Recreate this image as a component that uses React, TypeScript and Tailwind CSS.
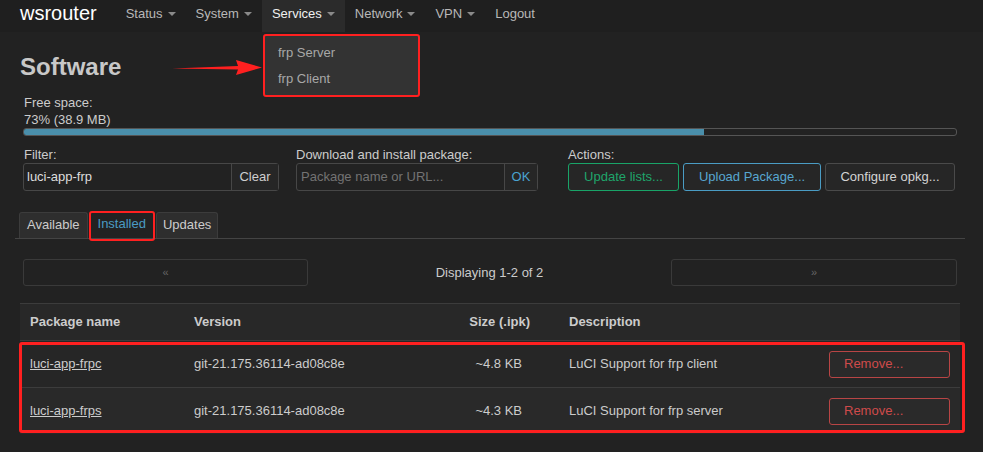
import React from 'react';

const navItems = ['Status', 'System', 'Services', 'Network', 'VPN'];

const Caret = () => (
  <span className="ml-[5px] inline-block h-0 w-0 border-x-[4px] border-t-[4px] border-x-transparent border-t-[#8a8a8a]" />
);

const packages = [
  { name: 'luci-app-frpc', version: 'git-21.175.36114-ad08c8e', size: '~4.8 KB', desc: 'LuCI Support for frp client' },
  { name: 'luci-app-frps', version: 'git-21.175.36114-ad08c8e', size: '~4.3 KB', desc: 'LuCI Support for frp server' },
];

const App = () => {
  return (
    <div className="relative min-h-[452px] w-[983px] bg-[#222222] font-['Liberation_Sans',Arial,sans-serif] text-[13px] text-[#cccccc]">
      {/* top bar */}
      <header className="flex h-[32px] items-center bg-[#1f1f1f]">
        <div className="ml-[20px] mr-[19px] pb-[6px] text-[20px] leading-[32px] text-white">wsrouter</div>
        {navItems.map((item) => (
          <div
            key={item}
            className={
              item === 'Services'
                ? 'flex h-[32px] items-center bg-[#2b2b2b] px-[10px] pb-[5px] text-[#f0f0f0]'
                : 'flex h-[32px] items-center px-[10px] pb-[5px] text-[#b8b8b8]'
            }
          >
            {item}
            <Caret />
          </div>
        ))}
        <div className="flex h-[32px] items-center px-[10px] pb-[5px] text-[#b8b8b8]">Logout</div>
      </header>

      {/* open Services menu */}
      <div className="absolute left-[263px] top-[34px] flex h-[63px] w-[157px] flex-col justify-center gap-[10px] rounded-[3px] border-[2px] border-[#ff2020] bg-[#333333] pl-[13px] text-[#a8a8a8]">
        <span className="leading-[16px]">frp Server</span>
        <span className="leading-[16px]">frp Client</span>
      </div>
      <svg className="absolute left-[172px] top-[58px]" width="90" height="20" viewBox="0 0 90 20">
        <path d="M0 10.5 L66 8 L64 2 L90 9.5 L64 17 L66 11.5 Z" fill="#ff2020" />
      </svg>

      <main className="pl-[23px] pr-[26px]">
        <h2 className="-ml-[3px] mt-[20px] text-[24px] font-bold leading-[30px] text-[#c8c8c8]">Software</h2>

        <div className="mt-[12px] pl-[1px] leading-[17px]">Free space:</div>
        <div className="pl-[1px] leading-[17px]">73% (38.9 MB)</div>
        <div className="h-[8px] w-[934px] overflow-hidden rounded-[3px] border border-[#555555]">
          <div className="h-full w-[73%] bg-[#4a8fab]" />
        </div>

        <div className="mt-[10px] flex">
          <div className="w-[256px]">
            <div className="pl-[1px] leading-[17px]">Filter:</div>
            <div className="flex h-[28px] rounded-[3px] border border-[#474747] bg-[#222222]">
              <div className="flex flex-1 items-center pl-[3px] text-[#dddddd]">luci-app-frp</div>
              <div className="flex w-[47px] items-center justify-center border-l border-[#474747] bg-[#262626] text-[#cfcfcf]">Clear</div>
            </div>
          </div>
          <div className="ml-[17px] w-[242px]">
            <div className="leading-[17px]">Download and install package:</div>
            <div className="flex h-[28px] rounded-[3px] border border-[#474747] bg-[#222222]">
              <div className="flex flex-1 items-center pl-[4px] text-[#737373]">Package name or URL...</div>
              <div className="flex w-[33px] items-center justify-center border-l border-[#474747] bg-[#262626] text-[#4aa3d0]">OK</div>
            </div>
          </div>
          <div className="ml-[30px]">
            <div className="leading-[17px]">Actions:</div>
            <div className="flex gap-[4px]">
              <div className="flex h-[28px] w-[111px] items-center justify-center rounded-[3px] border border-[#19a468] bg-[#262626] text-[#1fa56b]">Update lists...</div>
              <div className="flex h-[28px] w-[138px] items-center justify-center rounded-[3px] border border-[#4a9cc4] bg-[#262626] text-[#58a6d0]">Upload Package...</div>
              <div className="flex h-[28px] w-[130px] items-center justify-center rounded-[3px] border border-[#4a4a4a] bg-[#262626] text-[#d4d4d4]">Configure opkg...</div>
            </div>
          </div>
        </div>

        {/* tabs */}
        <div className="-mx-[8px] mt-[21px] flex h-[27px] items-end gap-[2px] border-b border-[#444444] pl-[4px]">
          <div className="flex h-[26px] items-center rounded-t-[3px] border border-b-0 border-[#3c3c3c] bg-[#2e2e2e] px-[7px] pb-[2px]">Available</div>
          <div className="relative flex h-[27px] items-center rounded-t-[3px] bg-[#222222] px-[8px] pb-[2px] text-[#4a9cc4]">
            Installed
            <span className="absolute -inset-x-[1px] -bottom-[3px] top-0 rounded-[3px] border-[2px] border-[#ff2020]" />
          </div>
          <div className="flex h-[26px] items-center rounded-t-[3px] border border-b-0 border-[#3c3c3c] bg-[#2e2e2e] px-[6px] pb-[2px]">Updates</div>
        </div>

        {/* pager */}
        <div className="mt-[20px] flex h-[27px] items-center">
          <div className="flex h-[27px] w-[285px] items-center justify-center rounded-[3px] border border-[#3a3a3a] text-[11px] text-[#666666]">«</div>
          <div className="flex-1 text-center">Displaying 1-2 of 2</div>
          <div className="flex h-[27px] w-[286px] items-center justify-center rounded-[3px] border border-[#3a3a3a] text-[11px] text-[#666666]">»</div>
        </div>

        {/* package table */}
        <div className="-ml-[3px] mt-[17px] w-[940px]">
          <div className="grid h-[38px] grid-cols-[164px_246px_110px_1fr_141px] items-center border-y border-[#3c3c3c] bg-[#282828] font-bold">
            <div className="pl-[10px]">Package name</div>
            <div className="pl-[10px]">Version</div>
            <div className="pr-[10px] text-right">Size (.ipk)</div>
            <div className="pl-[29px]">Description</div>
            <div />
          </div>
          <div className="relative">
            {packages.map((p, i) => (
              <div
                key={p.name}
                className={
                  i === 0
                    ? 'grid h-[47px] grid-cols-[164px_246px_110px_1fr_141px] items-center border-b border-[#3c3c3c] bg-[#262626]'
                    : 'grid h-[46px] grid-cols-[164px_246px_110px_1fr_141px] items-center bg-[#292929]'
                }
              >
                <div className="pl-[10px] underline">{p.name}</div>
                <div className="pl-[10px]">{p.version}</div>
                <div className="pr-[18px] text-right">{p.size}</div>
                <div className="pl-[29px]">{p.desc}</div>
                <div className="flex justify-end pr-[10px]">
                  <div className="flex h-[27px] w-[121px] items-center rounded-[3px] border border-[#b84545] bg-[#2a2a2a] pl-[14px] text-[#cf4a4a]">Remove...</div>
                </div>
              </div>
            ))}
            <span className="absolute -left-[1px] -right-[5px] bottom-[1px] top-[1px] rounded-[3px] border-[3px] border-[#ff2020]" />
          </div>
        </div>
      </main>
    </div>
  );
};

export default App;
